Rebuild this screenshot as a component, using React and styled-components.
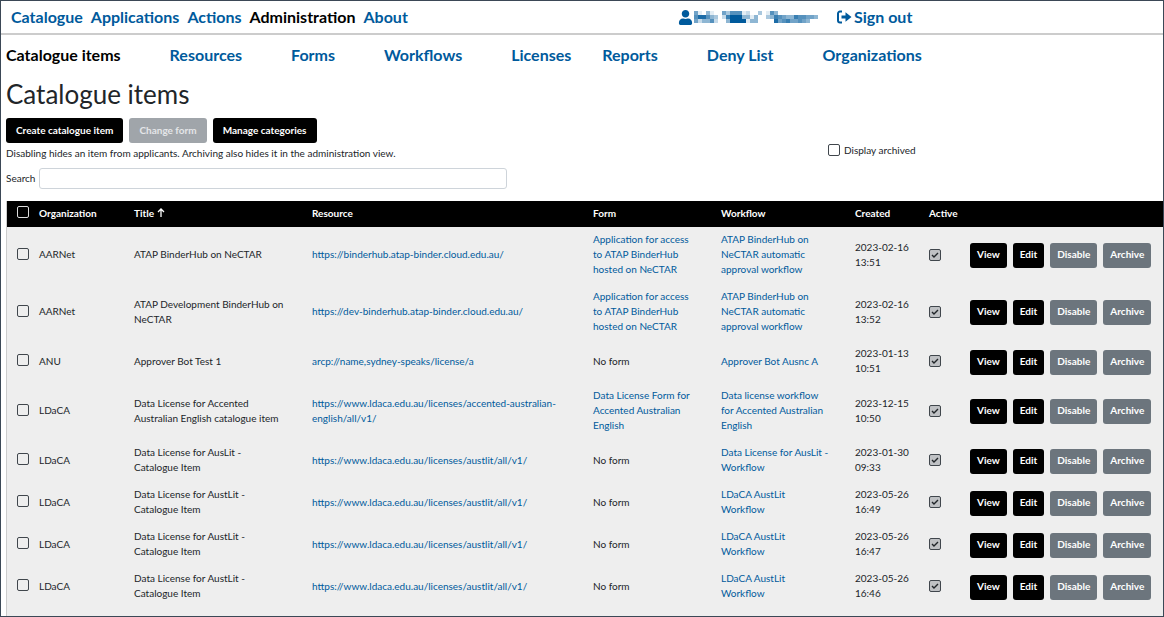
import React, { useState } from "react";
import styled, { createGlobalStyle } from "styled-components";
import { FaUser } from "react-icons/fa";

const GlobalStyle = createGlobalStyle`
  * {
    box-sizing: border-box;
  }
  body {
    margin: 0;
    background: #fff;
    color: #212529;
    font-family: Lato, sans-serif;
    font-size: 10px;
    line-height: 15px;
  }
  button,
  input {
    font: inherit;
  }
  a {
    color: #005a9c;
    text-decoration: none;
  }
`;

const Frame = styled.div`
  height: 100vh;
  border: 1px solid #3b4856;
  overflow-y: auto;
  scrollbar-width: none;
`;

const Header = styled.header`
  display: flex;
  height: 34px;
  padding: 0 10px;
  border-bottom: 2px solid #ccc;
`;

const MainNav = styled.nav`
  display: flex;
  align-items: center;
  gap: 8px;
  width: 667px;
`;

const UserNav = styled.div`
  display: flex;
  align-items: center;
  gap: 18px;
`;

const NavLink = styled.a`
  display: flex;
  align-items: center;
  gap: 1px;
  font-size: 16px;
  font-weight: 700;
  line-height: 20px;
  white-space: nowrap;
  color: ${(props) => (props.$active ? "#000" : "#005a9c")};
`;

const SubNav = styled.nav`
  display: flex;
  gap: 31px;
  padding: 10px 5px;
`;

const SubNavGroup = styled.div`
  display: flex;
  gap: 49px;
`;

const Main = styled.main`
  padding-left: 5px;
`;

const Title = styled.h1`
  margin: 3px 0 8px;
  font-size: 26px;
  font-weight: 400;
  line-height: 32px;
`;

const Commands = styled.div`
  display: flex;
  gap: 6px;
`;

const Button = styled.button`
  height: 25px;
  padding: 0 9px 1px;
  border: 1px solid transparent;
  border-radius: 3px;
  background: ${(props) => (props.$secondary ? "#6c757d" : "#000")};
  color: #fff;
  font-weight: 700;
  white-space: nowrap;
  cursor: pointer;
  &:disabled {
    background: #a0a5aa;
    color: #e4e6e8;
    cursor: default;
  }
`;

const RowCommands = styled(Commands)`
  ${Button} {
    padding: 0 6px 2px;
  }
`;

const Info = styled.div`
  display: flex;
  justify-content: space-between;
  width: 80%;
  padding-top: 2px;

  p {
    margin: 0;
    line-height: 17px;
  }
`;

const CheckLabel = styled.label`
  display: flex;
  align-items: center;
  gap: 4px;
  height: 10px;
  margin-right: 16px;
`;

const Checkbox = styled.input`
  display: block;
  appearance: none;
  width: 12px;
  height: 12px;
  margin: 0;
  border: 1px solid ${(props) => props.$color || "#40464c"};
  border-radius: 2px;
  cursor: pointer;
  &:checked {
    border-color: #40464c;
    background: #bfc1c4
      url("data:image/svg+xml,%3Csvg xmlns='http://www.w3.org/2000/svg' viewBox='0 0 10 10'%3E%3Cpath d='M2 5l2 2 4-4' fill='none' stroke='%23212529' stroke-width='1.4'/%3E%3C/svg%3E");
  }
`;

const Search = styled.div`
  display: flex;
  align-items: center;
  gap: 4px;
  margin: 6px 0 12px;

  input {
    width: 468px;
    height: 21px;
    padding: 0 6px;
    border: 1px solid #ced4da;
    border-radius: 3px;
  }
`;

const Table = styled.table`
  width: 100%;
  table-layout: fixed;
  border-collapse: separate;
  border-spacing: 0;
  border-left: 1px solid #ccc;
  background: #eee;

  th,
  td {
    padding: 5px 21px 7px 5px;
    text-align: left;
  }
  th {
    height: 26px;
    padding-top: 0;
    padding-bottom: 2px;
    background: #000;
    color: #fff;
    white-space: nowrap;
  }
  th:first-child,
  td:first-child {
    padding: 0 0 4px 10px;
  }
  td:last-child {
    padding: 0 0 0 5px;
  }
`;

const Time = styled.time`
  span {
    white-space: nowrap;
  }
`;

const SortIcon = styled.svg`
  width: 8px;
  height: 9px;
  margin-left: 3px;
`;

const columns = [
  ["Organization", 95],
  ["Title", 178],
  ["Resource"],
  ["Form", 128],
  ["Workflow", 134],
  ["Created", 74],
  ["Active", 41],
];

const austlit = {
  org: "LDaCA",
  title: "Data License for AustLit - Catalogue Item",
  resource: "https://www.ldaca.edu.au/licenses/austlit/all/v1/",
  workflow: "LDaCA AustLit Workflow",
};

const items = [
  {
    org: "AARNet",
    title: "ATAP BinderHub on NeCTAR",
    resource: "https://binderhub.atap-binder.cloud.edu.au/",
    form: "Application for access to ATAP BinderHub hosted on NeCTAR",
    workflow: "ATAP BinderHub on NeCTAR automatic approval workflow",
    created: "2023-02-16 13:51",
  },
  {
    org: "AARNet",
    title: "ATAP Development BinderHub on NeCTAR",
    resource: "https://dev-binderhub.atap-binder.cloud.edu.au/",
    form: "Application for access to ATAP BinderHub hosted on NeCTAR",
    workflow: "ATAP BinderHub on NeCTAR automatic approval workflow",
    created: "2023-02-16 13:52",
  },
  {
    org: "ANU",
    title: "Approver Bot Test 1",
    resource: "arcp://name,sydney-speaks/license/a",
    workflow: "Approver Bot Ausnc A",
    created: "2023-01-13 10:51",
  },
  {
    org: "LDaCA",
    title: "Data License for Accented Australian English catalogue item",
    resource:
      "https://www.ldaca.edu.au/licenses/accented-australian-english/all/v1/",
    form: "Data License Form for Accented Australian English",
    workflow: "Data license workflow for Accented Australian English",
    created: "2023-12-15 10:50",
  },
  {
    ...austlit,
    title: "Data License for AusLit - Catalogue Item",
    workflow: "Data License for AusLit - Workflow",
    created: "2023-01-30 09:33",
  },
  { ...austlit, created: "2023-05-26 16:49" },
  { ...austlit, created: "2023-05-26 16:47" },
  { ...austlit, created: "2023-05-26 16:46" },
  { ...austlit, created: "2023-05-26 16:45" },
];

// obscured user name, each digit is the strength of one square
const nameRows = [
  "5104100536661200301640000000000",
  "6886430279994414003476544766554",
  "5244620049999144000085675565400",
];

function UserName() {
  return (
    <svg width="124" height="12" viewBox="0 0 124 12" role="img" aria-label="User">
      {nameRows.map((row, y) =>
        row
          .split("")
          .map((v, x) => (
            <rect
              key={`${x}-${y}`}
              x={x * 4}
              y={y * 4}
              width="4"
              height="4"
              fill="#005a9c"
              opacity={v / 9}
            />
          ))
      )}
    </svg>
  );
}

function SignOutIcon() {
  return (
    <svg width="17" height="14" viewBox="0 0 17 14" aria-hidden="true">
      <path d="M6 1.500H4a2 2 0 0 0-2 2v7a2 2 0 0 0 2 2h2" fill="none" stroke="#005a9c" strokeWidth="2" />
      <path d="M5.500 5.500h4V2.300L15.500 7l-6 4.700V8.500h-4z" fill="#005a9c" />
    </svg>
  );
}

function Row({ item }) {
  const [selected, setSelected] = useState(false);
  const [date, time] = item.created.split(" ");

  return (
    <tr>
      <td>
        <Checkbox
          type="checkbox"
          aria-label={"Select " + item.title}
          checked={selected}
          onChange={() => setSelected(!selected)}
        />
      </td>
      <td>{item.org}</td>
      <td>{item.title}</td>
      <td>
        <a href="#resource">{item.resource}</a>
      </td>
      <td>{item.form ? <a href="#form">{item.form}</a> : "No form"}</td>
      <td>
        <a href="#workflow">{item.workflow}</a>
      </td>
      <td>
        <Time>
          <span>{date}</span> {time}
        </Time>
      </td>
      <td>
        <Checkbox type="checkbox" aria-label="Active" checked readOnly />
      </td>
      <td>
        <RowCommands>
          <Button>View</Button>
          <Button>Edit</Button>
          <Button $secondary>Disable</Button>
          <Button $secondary>Archive</Button>
        </RowCommands>
      </td>
    </tr>
  );
}

function App() {
  return (
    <Frame>
      <GlobalStyle />
      <Header>
        <MainNav>
          <NavLink href="#catalogue">Catalogue</NavLink>
          <NavLink href="#applications">Applications</NavLink>
          <NavLink href="#actions">Actions</NavLink>
          <NavLink href="#administration" $active>
            Administration
          </NavLink>
          <NavLink href="#about">About</NavLink>
        </MainNav>
        <UserNav>
          <NavLink href="#profile">
            <FaUser size={15} />
            <UserName />
          </NavLink>
          <NavLink href="#signout">
            <SignOutIcon />
            Sign out
          </NavLink>
        </UserNav>
      </Header>
      <SubNav>
        <SubNavGroup>
          <NavLink href="#items" $active>
            Catalogue items
          </NavLink>
          <NavLink href="#resources">Resources</NavLink>
          <NavLink href="#forms">Forms</NavLink>
          <NavLink href="#workflows">Workflows</NavLink>
          <NavLink href="#licenses">Licenses</NavLink>
        </SubNavGroup>
        <SubNavGroup>
          <NavLink href="#reports">Reports</NavLink>
          <NavLink href="#denylist">Deny List</NavLink>
          <NavLink href="#organizations">Organizations</NavLink>
        </SubNavGroup>
      </SubNav>
      <Main>
        <Title>Catalogue items</Title>
        <Commands>
          <Button>Create catalogue item</Button>
          <Button disabled>Change form</Button>
          <Button>Manage categories</Button>
        </Commands>
        <Info>
          <p>
            Disabling hides an item from applicants. Archiving also hides it in
            the administration view.
          </p>
          <CheckLabel>
            <Checkbox type="checkbox" />
            Display archived
          </CheckLabel>
        </Info>
        <Search>
          <label htmlFor="search">Search</label>
          <input id="search" type="text" />
        </Search>
        <Table>
          <colgroup>
            <col width="27" />
            {columns.map(([name, width]) => (
              <col key={name} width={width} />
            ))}
            <col width="198" />
          </colgroup>
          <thead>
            <tr>
              <th>
                <Checkbox type="checkbox" $color="#ddd" aria-label="Select all" />
              </th>
              {columns.map(([name]) => (
                <th key={name}>
                  {name}
                  {name === "Title" && (
                    <SortIcon viewBox="0 0 8 9" aria-hidden="true">
                      <path d="M4 9V1M1 4l3-3 3 3" fill="none" stroke="#fff" strokeWidth="1.3" />
                    </SortIcon>
                  )}
                </th>
              ))}
              <th />
            </tr>
          </thead>
          <tbody>
            {items.map((item) => (
              <Row key={item.created} item={item} />
            ))}
          </tbody>
        </Table>
      </Main>
    </Frame>
  );
}

export default App;
